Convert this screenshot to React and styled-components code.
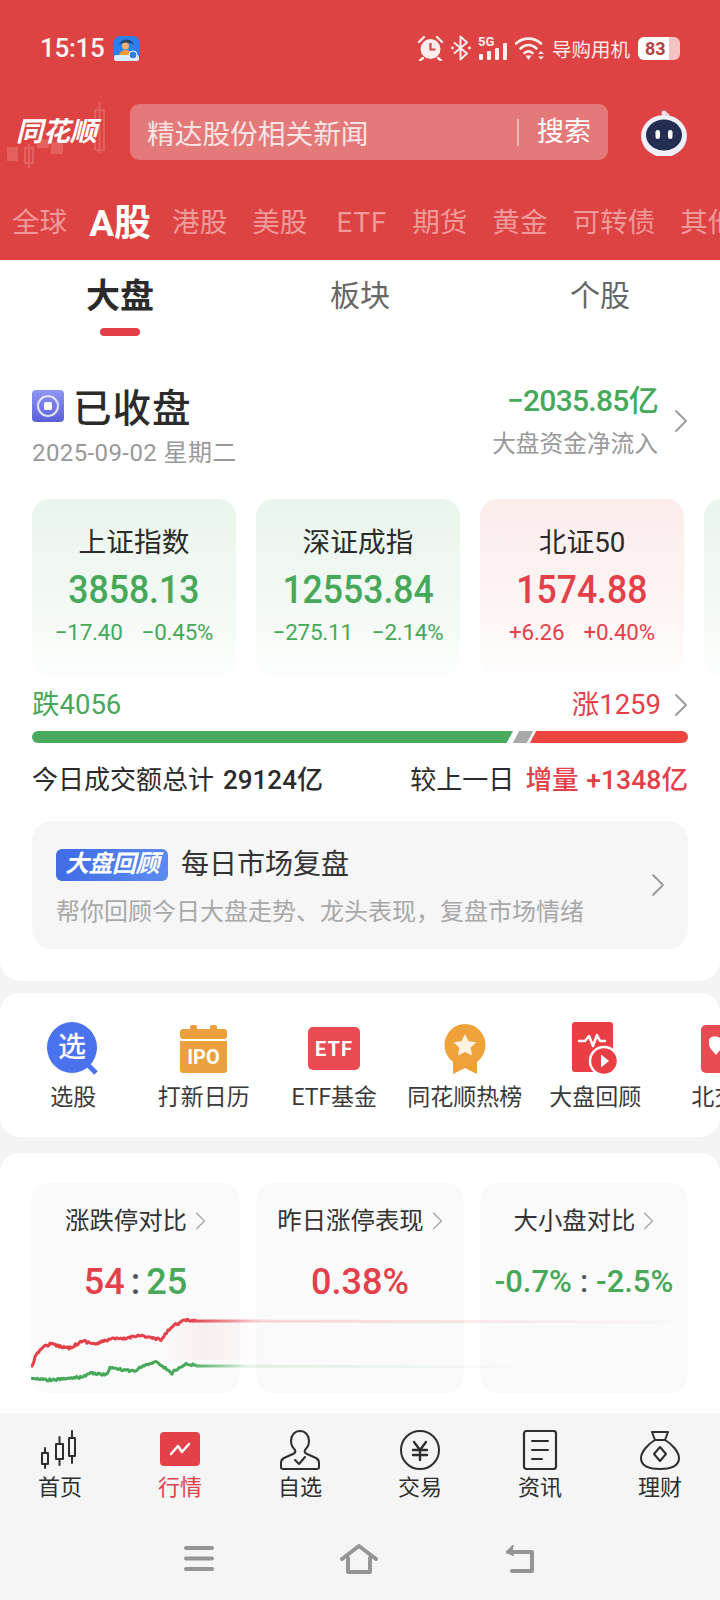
import React from "react";
import styled, { createGlobalStyle } from "styled-components";

const Global = createGlobalStyle`
  html, body { margin: 0; padding: 0; background: #f5f5f5; }
  * { box-sizing: border-box; }
  body { font-family: Roboto, "Noto Sans CJK SC", sans-serif; }
`;

const GREEN = "#46a858";
const RED = "#e3404a";

const Page = styled.div`
  width: 720px; height: 1600px; overflow: hidden; display: flex; flex-direction: column;
  background: #f4f4f4; color: #2b2b2b;
`;
const Header = styled.header`
  height: 260px; background: #dd4342; flex: none; display: flex; flex-direction: column; overflow: hidden;
`;
const StatusBar = styled.div`
  height: 96px; display: flex; align-items: center; padding: 0 40px; color: #fff;
`;
const Time = styled.span`
  font-size: 26px; font-weight: 500; letter-spacing: -0.3px; width: 74px; color: #fdf3f3;
`;
const StatusRight = styled.div`
  margin-left: auto; display: flex; align-items: center; height: 26px;
`;
const Carrier = styled.span`
  font-size: 19.5px; margin: 0 8px 0 7px; color: #fdeaea; white-space: nowrap;
`;
const Battery = styled.div`
  width: 42px; height: 23px; border-radius: 6px; font-size: 18px; font-weight: 700; color: #b2403f;
  display: flex; align-items: center; padding-left: 7px; letter-spacing: 0;
  background: linear-gradient(90deg, #fff 0 74%, #f3c3c3 74% 100%);
`;
const StatusIcon = styled.svg`
  display: block; flex: none; margin-right: ${(p) => p.$mr ?? 7}px;
`;
const SearchRow = styled.div`
  height: 56px; margin-top: 8px; display: flex; align-items: center; padding-left: 18px;
`;
const Logo = styled.div`
  position: relative; width: 112px; flex: none;
  font-size: 27px; font-weight: 700; font-style: italic; color: #fff; letter-spacing: 0;
  line-height: 30px; white-space: nowrap; margin-left: -2px; margin-right: 2px;
`;
const LogoCandles = styled.svg`
  position: absolute; left: -16px; top: -20px; pointer-events: none;
`;
const LogoText = styled.span`
  position: relative;
`;
const SearchBox = styled.div`
  width: 478px; height: 56px; border-radius: 9px; background: #e47979; flex: none;
  display: flex; align-items: center; padding: 0 17px;
`;
const Placeholder = styled.span`
  font-size: 27.7px; color: #fbe4e4; flex: 1; white-space: nowrap;
`;
const SearchButton = styled.span`
  font-size: 27px; color: #fff; border-left: 2px solid #f2b5b5; padding-left: 18px;
  line-height: 27px; white-space: nowrap;
`;
const Robot = styled.svg`
  margin-left: 32px; flex: none;
`;
const MarketTabs = styled.nav`
  height: 44px; margin-top: 41px; display: flex; align-items: center; padding-left: 12px;
  gap: 25px; overflow: hidden; white-space: nowrap; flex: none;
`;
const MarketTab = styled.span`
  font-size: ${(p) => (p.$active ? 37 : 27.6)}px; font-weight: ${(p) => (p.$active ? 700 : 400)};
  color: ${(p) => (p.$active ? "#fff" : "#f09a99")};
  margin: ${(p) => (p.$active ? "0 -4px -2px -3px" : p.$latin ? "0 0 0 4px" : "0")};
  letter-spacing: ${(p) => (p.$latin ? 1 : 0)}px;
  flex: none; line-height: 44px;
`;
const Overview = styled.section`
  background: #fff; height: 721px; flex: none; border-radius: 0 0 20px 20px; display: flex; flex-direction: column;
`;
const SubTabs = styled.nav`
  height: 80px; flex: none; display: grid; grid-template-columns: 240px 240px 240px;
`;
const SubTab = styled.div`
  position: relative; display: flex; justify-content: center; padding-top: 13px;
  font-size: ${(p) => (p.$active ? 34 : 30)}px; font-weight: ${(p) => (p.$active ? 700 : 400)};
  color: ${(p) => (p.$active ? "#2b2b2b" : "#666")}; line-height: 46px;
  ${(p) => p.$active && `
    &::after { content: ""; position: absolute; left: 100px; width: 40px; top: 68px; height: 8px; border-radius: 4px; background: ${RED}; }
  `}
`;
const ClosedRow = styled.div`
  display: flex; padding: 41px 32px 0; height: 159px; flex: none; position: relative;
`;
const ClosedLeft = styled.div`
  display: flex; flex-direction: column;
`;
const ClosedTitle = styled.div`
  display: flex; align-items: center; gap: 9px; font-size: 38.5px; font-weight: 500; line-height: 56px;
  color: #2b2b2b; letter-spacing: 1px;
`;
const ClosedBadge = styled.svg`
  display: block; flex: none; margin-top: -6px;
`;
const ClosedDate = styled.div`
  font-size: 24px; color: #999; line-height: 30px; margin-top: 1px; letter-spacing: 0.4px;
`;
const NetFlow = styled.div`
  margin-left: auto; margin-right: 30px; display: flex; flex-direction: column; align-items: flex-end;
`;
const NetValue = styled.div`
  font-size: 30px; font-weight: 500; color: ${GREEN}; line-height: 40px; letter-spacing: -0.7px;
`;
const NetLabel = styled.div`
  font-size: 23.7px; color: #999; line-height: 30px; margin-top: 8px;
`;
const ChevronBox = styled.svg`
  display: block; flex: none;
`;
const ClosedChevron = styled(ChevronBox)`
  position: absolute; right: 32px; top: 69px;
`;
const IndexRow = styled.div`
  display: flex; gap: 20px; padding-left: 32px; overflow: hidden; flex: none; height: 178px;
`;
const IndexCard = styled.div`
  flex: none; width: 204px; height: 178px; border-radius: 18px; display: flex; flex-direction: column;
  align-items: center; padding-top: 24px;
  background: linear-gradient(180deg, ${(p) => (p.$up ? "#fcecec" : "#e9f5ec")} 0%, ${(p) => (p.$up ? "#fdf4f4" : "#f2f9f4")} 55%, ${(p) => (p.$up ? "#fffdfd" : "#fcfefc")} 100%);
`;
const IndexName = styled.div`
  font-size: 27.7px; line-height: 40px; color: #2b2b2b;
`;
const IndexValue = styled.div`
  font-size: 39.5px; font-weight: 500; line-height: 48px; margin-top: 3px; transform: scaleX(0.9);
  color: ${(p) => (p.$up ? RED : GREEN)};
`;
const IndexDelta = styled.div`
  display: flex; gap: 19px; font-size: 22.4px; line-height: 30px; margin-top: 3px; letter-spacing: -0.2px;
  color: ${(p) => (p.$up ? RED : GREEN)};
`;
const BreadthRow = styled.div`
  display: flex; align-items: center; justify-content: space-between; padding: 0 32px; height: 40px;
  margin-top: 8px; font-size: 27.5px;
`;
const BreadthSide = styled.span`
  color: ${(p) => (p.$up ? RED : GREEN)}; line-height: 40px;
`;
const BreadthRight = styled.div`
  display: flex; align-items: center; gap: 13px;
`;
const BreadthBar = styled.div`
  display: flex; margin: 6px 32px 0; height: 12px; border-radius: 6px; overflow: hidden; flex: none; position: relative;
`;
const BarSegment = styled.div`
  height: 100%; background: ${(p) => p.$color};
  flex: ${(p) => (p.$grow ? "1" : "none")};
  width: ${(p) => (p.$w ? p.$w + "px" : "auto")};
  margin-left: ${(p) => p.$ml || 0}px;
  transform: skewX(-28deg);
  ${(p) => p.$first && "transform-origin: top; margin-left: -6px; padding-left: 6px;"}
  ${(p) => p.$last && "margin-right: -6px;"}
`;
const VolumeRow = styled.div`
  display: flex; justify-content: space-between; padding: 0 32px; font-size: 26px; line-height: 40px; margin-top: 17px; flex: none;
`;
const VolumeNumber = styled.strong`
  font-weight: 500; margin-left: 9px;
`;
const VolumeIncrease = styled.span`
  color: ${RED}; font-weight: 500; margin-left: 11px; font-size: 26.6px; word-spacing: 1px;
`;
const ReviewCard = styled.div`
  margin: 21px 32px 0; height: 128px; border-radius: 20px; background: #f6f6f6; position: relative; flex: none;
  padding: 24px 24px 0;
`;
const ReviewTop = styled.div`
  display: flex; align-items: center; gap: 13px; height: 40px;
`;
const ReviewBadge = styled.span`
  width: 112px; height: 32px; border-radius: 6px; background: linear-gradient(100deg, #3f6be4, #5b8cf0);
  color: #fff; font-size: 24px; font-weight: 700; font-style: italic; text-align: center; line-height: 31px; white-space: nowrap; letter-spacing: -0.5px;
`;
const ReviewTitle = styled.span`
  font-size: 28px; line-height: 40px; color: #333;
`;
const ReviewSub = styled.div`
  font-size: 24px; color: #a8a8a8; line-height: 36px; margin-top: 9px; white-space: nowrap;
`;
const ReviewChevron = styled(ChevronBox)`
  position: absolute; right: 23px; top: 52px;
`;
const ToolCard = styled.section`
  margin-top: 12px; height: 144px; background: #fff; border-radius: 20px; flex: none; overflow: hidden;
  display: flex; padding-top: 27px;
`;
const Tool = styled.div`
  flex: none; width: 130.5px; display: flex; flex-direction: column; align-items: center;
  ${(p) => p.$first && "margin-left: 8px;"}
`;
const ToolIcon = styled.div`
  height: 57px; display: flex; align-items: center; justify-content: center;
`;
const ToolLabel = styled.div`
  font-size: 23px; line-height: 36px; color: #3a3a3a; margin-top: 3px; white-space: nowrap;
`;
const CompareCard = styled.section`
  margin-top: 16px; background: #fff; border-radius: 20px 20px 0 0; flex: 1; min-height: 0;
  padding: 30px 32px 0 31px; position: relative; display: grid; grid-template-columns: 209px 208px 208px; column-gap: 16px; align-content: start;
`;
const Mini = styled.div`
  height: 210px; background: #fafafa; border-radius: 18px; display: flex; flex-direction: column; align-items: center;
  padding-top: 20px;
`;
const MiniTitle = styled.div`
  display: flex; align-items: center; gap: 8px; font-size: 24.4px; line-height: 36px; color: #333; white-space: nowrap;
`;
const MiniValue = styled.div`
  font-size: ${(p) => p.$size || 36}px; font-weight: 500; line-height: 50px; margin-top: 18px; white-space: nowrap;
  color: ${(p) => (p.$up ? RED : GREEN)};
`;
const Colon = styled.span`
  color: #555; margin: 0 ${(p) => p.$m ?? 6}px;
`;
const ValueUp = styled.span`
  color: ${RED};
`;
const Spark = styled.svg`
  position: absolute; left: 31px; top: 165px; pointer-events: none;
`;
const TabBar = styled.footer`
  height: 187px; flex: none; background: #f5f5f5; display: flex; flex-direction: column;
`;
const TabGrid = styled.div`
  display: grid; grid-template-columns: repeat(6, 120px); padding-top: 17px;
`;
const TabItem = styled.div`
  display: flex; flex-direction: column; align-items: center; gap: 3px;
  font-size: 22px; line-height: 30px; color: ${(p) => (p.$active ? RED : "#2e2e2e")};
`;
const SystemNav = styled.div`
  display: flex; justify-content: center; align-items: center; gap: 126px; margin-top: 41px;
`;

const Chevron = ({ w = 14, h = 24, color = "#999", Comp = ChevronBox }) => (
  <Comp width={w} height={h} viewBox="0 0 14 24">
    <polyline points="2,2 12,12 2,22" fill="none" stroke={color} strokeWidth="1.8" strokeLinecap="round" strokeLinejoin="round" />
  </Comp>
);

const Alarm = () => (
  <StatusIcon width="27" height="26" viewBox="0 0 27 26">
    <circle cx="13.5" cy="14" r="10" fill="#fdeeee" />
    <path d="M13.5 8v6.5h5" fill="none" stroke="#dd4342" strokeWidth="2.2" />
    <path d="M2 7l5-5M25 7l-5-5M6 23l-3 2.5M21 23l3 2.5" stroke="#fdeeee" strokeWidth="2.4" strokeLinecap="round" />
  </StatusIcon>
);
const Bluetooth = () => (
  <StatusIcon width="20" height="26" viewBox="0 0 20 26">
    <path d="M3 7.5l13 11-6.5 6V1.500l6.500 6-13 11" fill="none" stroke="#fdeeee" strokeWidth="2" strokeLinejoin="round" />
    <circle cx="1.500" cy="13" r="1.400" fill="#fdeeee" /><circle cx="18.500" cy="13" r="1.400" fill="#fdeeee" />
  </StatusIcon>
);
const Signal = () => (
  <StatusIcon width="30" height="26" viewBox="0 0 30 26">
    <text x="0" y="11" fontSize="13" fontWeight="700" fill="#fdeeee" fontFamily="Roboto">5G</text>
    <rect x="1" y="19" width="4" height="6" rx="1" fill="#fdeeee" />
    <rect x="9" y="16" width="4" height="9" rx="1" fill="#fdeeee" />
    <rect x="17" y="13" width="4" height="12" rx="1" fill="#fdeeee" />
    <rect x="25" y="8" width="4" height="17" rx="1" fill="#fdeeee" />
  </StatusIcon>
);
const Wifi = () => (
  <StatusIcon width="30" height="26" viewBox="0 0 30 26" $mr={0}>
    <path d="M1 8.500C8 2 19 2 26 8.500M5.500 13.500C10.500 9 16.500 9 21.500 13.500M9.500 18C12 16 15 16 17.500 18" fill="none" stroke="#fdeeee" strokeWidth="2.600" strokeLinecap="round" />
    <path d="M10.500 20.500h6L13.500 25z" fill="#fdeeee" />
    <path d="M23 19l3-3 3 3zM23 21.500l3 3 3-3z" fill="#fdeeee" />
  </StatusIcon>
);
const AppBadge = () => (
  <svg width="25" height="25" viewBox="0 0 25 25" style={{ display: "block", flex: "none" }}>
    <rect width="25" height="25" rx="6" fill="#2f7fe8" />
    <path d="M5 9c2-7 13-7 15 0l-3-2H8z" fill="#26406f" />
    <circle cx="11.500" cy="10" r="3.500" fill="#f0b070" />
    <path d="M5 21c0-6 4-7 7-7s6 2 6 7z" fill="#f39a3a" />
    <rect x="0" y="19" width="25" height="6" rx="2" fill="#d8ecff" />
    <circle cx="19" cy="19" r="4" fill="#2f7fe8" stroke="#fff" />
  </svg>
);

const Candles = () => (
  <LogoCandles width="112" height="76" viewBox="0 0 112 76" fill="#e4605f" stroke="#e4605f" strokeWidth="2">
    <rect x="8" y="51" width="9" height="12" />
    <rect x="25" y="51" fill="none" width="8" height="15" /><path d="M29 47v24" />
    <rect x="38" y="43" width="10" height="7" />
    <rect x="52" y="46" width="10" height="10" />
    <rect x="95" y="13" width="9" height="40" fill="none" /><path d="M99.500 5v51" />
  </LogoCandles>
);

const RobotIcon = () => (
  <Robot width="48" height="48" viewBox="0 0 48 48">
    <circle cx="24" cy="5" r="2.500" fill="#f7dfe6" />
    <path d="M24 5c4 0 5 2 5 5" stroke="#f7dfe6" strokeWidth="2" fill="none" />
    <ellipse cx="24" cy="28" rx="23" ry="21" fill="#eef0fb" />
    <ellipse cx="24" cy="27" rx="18" ry="15.500" fill="#242d52" />
    <rect x="15.500" y="22" width="4.500" height="9" rx="2.200" fill="#fff" />
    <rect x="28" y="22" width="4.500" height="9" rx="2.200" fill="#fff" />
  </Robot>
);

const SelectIcon = () => (
  <svg width="52" height="53" viewBox="0 0 52 53">
    <ellipse cx="25" cy="25.500" rx="25" ry="25.500" fill="#4a72ee" />
    <path d="M40 42l9 9" stroke="#4a72ee" strokeWidth="5" />
    <text x="25" y="35" textAnchor="middle" fontSize="28" fontWeight="500" fill="#fff" fontFamily="'Noto Sans CJK SC'">选</text>
  </svg>
);
const IpoIcon = () => (
  <svg width="48" height="48" viewBox="0 0 48 48">
    <rect x="0" y="4" width="47" height="10" rx="3" fill="#eb9f3d" />
    <rect x="10" y="0" width="7" height="6" rx="2" fill="#eb9f3d" /><rect x="30" y="0" width="7" height="6" rx="2" fill="#eb9f3d" />
    <path d="M0 16h47v29a3 3 0 0 1-3 3H3a3 3 0 0 1-3-3z" fill="#eb9f3d" />
    <text x="23.500" y="39" textAnchor="middle" fontSize="20" fontWeight="700" fill="#fff" fontFamily="Roboto">IPO</text>
  </svg>
);
const EtfIcon = () => (
  <svg width="52" height="44" viewBox="0 0 52 44">
    <rect width="52" height="43" rx="5" fill="#ea4a52" />
    <text x="26" y="29" textAnchor="middle" fontSize="20" fontWeight="700" fill="#fff" fontFamily="Roboto" letterSpacing="1">ETF</text>
  </svg>
);
const MedalIcon = () => (
  <svg width="42" height="50" viewBox="0 0 42 50">
    <path d="M9 32v18l12-6 12 6V32z" fill="#ef9f38" />
    <ellipse cx="21" cy="21" rx="20.500" ry="21" fill="#f0a23a" />
    <path d="M21 10l3.500 7.200 7.800 1.100-5.600 5.500 1.300 7.800-7-3.700-7 3.700 1.300-7.800-5.600-5.500 7.800-1.100z" fill="#fdf3df" />
  </svg>
);
const ReviewIcon = () => (
  <svg width="46" height="54" viewBox="0 0 46 54">
    <path d="M3 0h35a3 3 0 0 1 3 3v44a3 3 0 0 1-3 3H3a3 3 0 0 1-3-3V3a3 3 0 0 1 3-3z" fill="#e83e44" />
    <path d="M7 19h6l4-5 4 10 4-11 3 6h5" fill="none" stroke="#fff" strokeWidth="2.500" strokeLinejoin="round" strokeLinecap="round" />
    <circle cx="32" cy="39" r="14" fill="#e83e44" stroke="#fff" strokeWidth="2.500" />
    <path d="M29 32.500l8 6.500-8 6.500z" fill="#fff" />
  </svg>
);
const NorthIcon = () => (
  <svg width="46" height="48" viewBox="0 0 46 48" style={{ marginLeft: -4 }}>
    <rect width="46" height="48" rx="5" fill="#ea4a52" />
    <path d="M8 14a8 8 0 0 1 14 5c0 4-4 7-7 11-3-4-7-7-7-11z" fill="#fff" />
  </svg>
);

const Stroke = styled.svg`
  display: block; fill: none; stroke: #2e2e2e; stroke-width: 2; stroke-linejoin: round; stroke-linecap: round;
`;
const HomeTab = () => (
  <Stroke width="40" height="40" viewBox="0 0 40 40">
    <rect x="2" y="23" width="6" height="11" /><path d="M5 18v5M5 34v4" />
    <rect x="16" y="14" width="7" height="15" /><path d="M19.500 7v7M19.500 29v6" />
    <rect x="29" y="8" width="6" height="18" /><path d="M32 1v7M32 26v7" />
  </Stroke>
);
const MarketIcon = () => (
  <svg width="40" height="40" viewBox="0 0 40 40" style={{ display: "block" }}>
    <rect y="2" width="40" height="34" rx="4" fill={RED} />
    <path d="M11 24l7-8 4 6 7-8" fill="none" stroke="#fff" strokeWidth="2.500" strokeLinecap="round" strokeLinejoin="round" />
  </svg>
);
const WatchIcon = () => (
  <Stroke width="40" height="40" viewBox="0 0 40 40">
    <path d="M20 1c-5 0-9 4-9 10 0 4 2 7 4 9 1 2 0 3-2 4l-9 4c-2 1-3 3-3 5v4c0 2 1 2 2 2h34c1 0 2 0 2-2v-4c0-2-1-4-3-5l-9-4c-2-1-3-2-2-4 2-2 4-5 4-9 0-6-4-10-9-10z" />
    <path d="M15 30l4 4 6-7" />
  </Stroke>
);
const TradeIcon = () => (
  <Stroke width="40" height="40" viewBox="0 0 40 40">
    <ellipse cx="20" cy="20" rx="19" ry="19" />
    <path d="M14 12l6 8 6-8M13 20h14M13 25h14M20 20v10" strokeWidth="2.400" />
  </Stroke>
);
const NewsIcon = () => (
  <Stroke width="40" height="40" viewBox="0 0 40 40">
    <rect x="4" y="1" width="32" height="38" rx="2.500" strokeWidth="2.200" />
    <path d="M12 11h16M12 20h16M12 29h10" />
  </Stroke>
);
const WealthIcon = () => (
  <Stroke width="40" height="40" viewBox="0 0 40 40">
    <path d="M12 2h16l-3 8H15z" />
    <path d="M15 10C8 14 1 22 1 28c0 8 7 11 19 11s19-3 19-11c0-6-7-14-14-18" />
    <path d="M20 17l6 7-6 7-6-7z" />
  </Stroke>
);

const NavIcon = styled.svg`
  display: block; fill: none; stroke: #959595; stroke-width: 4; stroke-linecap: round; stroke-linejoin: round;
`;

// deterministic jitter so the little intraday lines look like tick data
const sparkPath = (anchors, seed, amp) => {
  let s = seed;
  const rnd = () => { s = (s * 16807) % 2147483647; return s / 2147483647 - 0.5; };
  const pts = [];
  for (let i = 0; i < anchors.length - 1; i++) {
    const [x0, y0] = anchors[i];
    const [x1, y1] = anchors[i + 1];
    const n = Math.max(1, Math.round((x1 - x0) / 1.3));
    for (let j = 0; j < n; j++) {
      const t = j / n;
      const jitter = x0 < 160 ? rnd() * amp : 0;
      pts.push(`${(x0 + (x1 - x0) * t).toFixed(1)},${(y0 + (y1 - y0) * t + jitter).toFixed(1)}`);
    }
  }
  pts.push(anchors[anchors.length - 1].join(","));
  return "M" + pts.join("L");
};
const redLine = [[0,48],[4,38],[10,28],[19,24],[38,28],[52,21],[65,24],[79,19],[93,19],[107,15],[130,20],[141,6],[155,0],[165,1],[640,2]];
const greenLine = [[0,59],[20,60],[52,57],[61,53],[75,55],[79,48],[102,51],[125,41],[141,53],[155,43],[166,46],[480,47]];

const Sparkline = () => (
  <Spark width="650" height="66" viewBox="0 -2 650 66">
    <defs>
      <linearGradient id="sr" gradientUnits="userSpaceOnUse" x1="0" x2="640" y1="0" y2="0">
        <stop offset="0" stopColor="#e3404a" /><stop offset="0.25" stopColor="#e3404a" />
        <stop offset="0.36" stopColor="#e3404a" stopOpacity="0.2" /><stop offset="1" stopColor="#e3404a" stopOpacity="0.02" />
      </linearGradient>
      <linearGradient id="sg" gradientUnits="userSpaceOnUse" x1="0" x2="480" y1="0" y2="0">
        <stop offset="0" stopColor="#46a858" /><stop offset="0.33" stopColor="#46a858" />
        <stop offset="0.45" stopColor="#46a858" stopOpacity="0.14" /><stop offset="1" stopColor="#46a858" stopOpacity="0.02" />
      </linearGradient>
      <linearGradient id="sa" gradientUnits="userSpaceOnUse" x1="130" x2="240" y1="0" y2="0">
        <stop offset="0" stopColor="#e3404a" stopOpacity="0" /><stop offset="0.35" stopColor="#e3404a" stopOpacity="0.06" />
        <stop offset="1" stopColor="#e3404a" stopOpacity="0" />
      </linearGradient>
    </defs>
    <path d="M130 20L141 6L155 0L240 1V40H130Z" fill="url(#sa)" />
    <path d={sparkPath(redLine, 12345, 2.6)} fill="none" stroke="url(#sr)" strokeWidth="3" strokeLinejoin="round" />
    <path d={sparkPath(greenLine, 54321, 2.4)} fill="none" stroke="url(#sg)" strokeWidth="3" strokeLinejoin="round" />
  </Spark>
);

const marketTabs = ["全球", "A股", "港股", "美股", "ETF", "期货", "黄金", "可转债", "其他"];
const indices = [
  { name: "上证指数", value: "3858.13", a: "−17.40", b: "−0.45%" },
  { name: "深证成指", value: "12553.84", a: "−275.11", b: "−2.14%" },
  { name: "北证50", value: "1574.88", a: "+6.26", b: "+0.40%", up: true },
];
const tools = [
  [SelectIcon, "选股"], [IpoIcon, "打新日历"], [EtfIcon, "ETF基金"], [MedalIcon, "同花顺热榜"], [ReviewIcon, "大盘回顾"], [NorthIcon, "北交所"],
];
const tabs = [
  [HomeTab, "首页"], [MarketIcon, "行情", true], [WatchIcon, "自选"], [TradeIcon, "交易"], [NewsIcon, "资讯"], [WealthIcon, "理财"],
];

export default function App() {
  return (
    <Page>
      <Global />
      <Header>
        <StatusBar>
          <Time>15:15</Time>
          <AppBadge />
          <StatusRight>
            <Alarm /><Bluetooth /><Signal /><Wifi />
            <Carrier>导购用机</Carrier>
            <Battery>83</Battery>
          </StatusRight>
        </StatusBar>
        <SearchRow>
          <Logo><Candles /><LogoText>同花顺</LogoText></Logo>
          <SearchBox>
            <Placeholder>精达股份相关新闻</Placeholder>
            <SearchButton>搜索</SearchButton>
          </SearchBox>
          <RobotIcon />
        </SearchRow>
        <MarketTabs>
          {marketTabs.map((t) => <MarketTab key={t} $active={t === "A股"} $latin={t === "ETF"}>{t}</MarketTab>)}
        </MarketTabs>
      </Header>

      <Overview>
        <SubTabs>
          <SubTab $active>大盘</SubTab>
          <SubTab>板块</SubTab>
          <SubTab>个股</SubTab>
        </SubTabs>
        <ClosedRow>
          <ClosedLeft>
            <ClosedTitle>
              <ClosedBadge width="32" height="32" viewBox="0 0 32 32">
                <defs><linearGradient id="cl" x1="0" y1="0" x2="0" y2="1"><stop offset="0" stopColor="#8f97f3" /><stop offset="1" stopColor="#5a5fd8" /></linearGradient></defs>
                <rect width="32" height="32" rx="4" fill="url(#cl)" />
                <circle cx="16" cy="16" r="10" fill="none" stroke="#dfe2ff" strokeWidth="2" />
                <rect x="12" y="12" width="8" height="8" rx="1.500" fill="#fff" />
              </ClosedBadge>
              已收盘
            </ClosedTitle>
            <ClosedDate>2025-09-02 星期二</ClosedDate>
          </ClosedLeft>
          <NetFlow>
            <NetValue>−2035.85亿</NetValue>
            <NetLabel>大盘资金净流入</NetLabel>
          </NetFlow>
          <Chevron Comp={ClosedChevron} />
        </ClosedRow>
        <IndexRow>
          {indices.map((d) => (
            <IndexCard key={d.name} $up={d.up}>
              <IndexName>{d.name}</IndexName>
              <IndexValue $up={d.up}>{d.value}</IndexValue>
              <IndexDelta $up={d.up}><span>{d.a}</span><span>{d.b}</span></IndexDelta>
            </IndexCard>
          ))}
          <IndexCard />
        </IndexRow>
        <BreadthRow>
          <BreadthSide>跌4056</BreadthSide>
          <BreadthRight>
            <BreadthSide $up>涨1259</BreadthSide>
            <Chevron />
          </BreadthRight>
        </BreadthRow>
        <BreadthBar>
          <BarSegment $first $color="#4caa5e" $w={487} />
          <BarSegment $color="#a9a9a9" $w={14} $ml={3} />
          <BarSegment $last $grow $color="#ec4640" $ml={3} />
        </BreadthBar>
        <VolumeRow>
          <span>今日成交额总计<VolumeNumber>29124亿</VolumeNumber></span>
          <span>较上一日<VolumeIncrease>增量 +1348亿</VolumeIncrease></span>
        </VolumeRow>
        <ReviewCard>
          <ReviewTop>
            <ReviewBadge>大盘回顾</ReviewBadge>
            <ReviewTitle>每日市场复盘</ReviewTitle>
          </ReviewTop>
          <ReviewSub>帮你回顾今日大盘走势、龙头表现，复盘市场情绪</ReviewSub>
          <Chevron Comp={ReviewChevron} />
        </ReviewCard>
      </Overview>

      <ToolCard>
        {tools.map(([Icon, label], i) => (
          <Tool key={label} $first={i === 0}>
            <ToolIcon><Icon /></ToolIcon>
            <ToolLabel>{label}</ToolLabel>
          </Tool>
        ))}
      </ToolCard>

      <CompareCard>
        <Mini>
          <MiniTitle>涨跌停对比<Chevron w={11} h={20} color="#aaa" /></MiniTitle>
          <MiniValue><ValueUp>54</ValueUp><Colon>:</Colon>25</MiniValue>
        </Mini>
        <Mini>
          <MiniTitle>昨日涨停表现<Chevron w={11} h={20} color="#aaa" /></MiniTitle>
          <MiniValue $up>0.38%</MiniValue>
        </Mini>
        <Mini>
          <MiniTitle>大小盘对比<Chevron w={11} h={20} color="#aaa" /></MiniTitle>
          <MiniValue $size={31}>-0.7%<Colon $m={8}>:</Colon>-2.5%</MiniValue>
        </Mini>
        <Sparkline />
      </CompareCard>

      <TabBar>
        <TabGrid>
          {tabs.map(([Icon, label, active]) => (
            <TabItem key={label} $active={active}><Icon />{label}</TabItem>
          ))}
        </TabGrid>
        <SystemNav>
          <NavIcon width="30" height="28" viewBox="0 0 30 28"><path d="M2 3h26M2 13.500h26M2 24h26" /></NavIcon>
          <NavIcon width="38" height="30" viewBox="0 0 38 30"><path d="M2 15L19 2l17 13M8 14v14h22V14" /></NavIcon>
          <NavIcon width="32" height="30" viewBox="0 0 32 30"><path d="M4 8h24v19H8" /><path d="M9 2L3 8l6 3" fill="#959595" strokeWidth="2" /></NavIcon>
        </SystemNav>
      </TabBar>
    </Page>
  );
}
